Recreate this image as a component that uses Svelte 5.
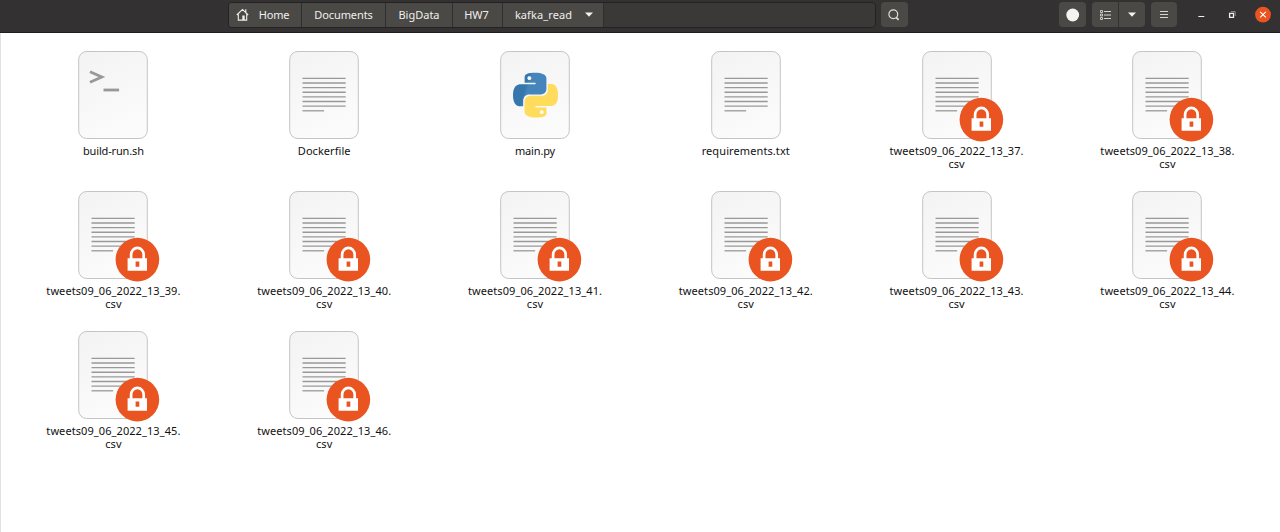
<script>
  const locked = (n) => ({ kind: 'text', locked: true, name: `tweets09_06_2022_13_${n}.`, rest: 'csv', spacing: 0.08 });
  const files = [
    { kind: 'shell', name: 'build-run.sh', spacing: -0.15 },
    { kind: 'text', name: 'Dockerfile', spacing: 0.05 },
    { kind: 'python', name: 'main.py', spacing: -0.15 },
    { kind: 'text', name: 'requirements.txt', spacing: 0.1 },
    ...[37, 38, 39, 40, 41, 42, 43, 44, 45, 46].map(locked)
  ];
  const lines = [0, 1, 2, 3, 4, 5, 6];
  const snake =
    'M14.25.18l.9.2.73.26.59.3.45.32.34.34.25.34.16.33.1.3.04.26.02.2-.01.13V8.5l-.05.63-.13.55-.21.46-.26.38-.3.31-.33.25-.35.19-.35.14-.33.1-.3.07-.26.04-.21.02H8.77l-.69.05-.59.14-.5.22-.41.27-.33.32-.27.35-.2.36-.15.37-.1.35-.07.32-.04.27-.02.21v3.06H3.17l-.21-.03-.28-.07-.32-.12-.35-.18-.36-.26-.36-.36-.35-.46-.32-.59-.28-.73-.21-.88-.14-1.05-.05-1.23.06-1.22.16-1.04.24-.87.32-.71.36-.57.4-.44.42-.33.42-.24.4-.16.36-.1.32-.05.24-.01h.16l.06.01h8.16v-.83H6.18l-.01-2.75-.02-.37.05-.34.11-.31.17-.28.25-.26.31-.23.38-.2.44-.18.51-.15.58-.12.64-.1.71-.06.77-.04.84-.02 1.27.05zm-6.3 1.98l-.23.33-.08.41.08.41.23.34.33.22.41.09.41-.09.33-.22.23-.34.08-.41-.08-.41-.23-.33-.33-.22-.41-.09-.41.09z';
</script>

<div class="window">
  <header>
    <nav>
      <button class="crumb home">
        <svg width="13" height="13" viewBox="0 0 13 13" fill="none" stroke="#f0efed" stroke-width="1.1">
          <path d="M.8 7 6.5 1.4 12.2 7M2.3 6.2v5.9h8.4V6.2M9.8 1.2v3" />
          <path d="M6.3 7.6h2.4V12H6.3z" fill="#f0efed" stroke="none" />
        </svg>
        <span>Home</span>
      </button>
      <button class="crumb docs">Documents</button>
      <button class="crumb data">BigData</button>
      <button class="crumb hw">HW7</button>
      <button class="crumb current">
        <span>kafka_read</span>
        <svg class="caret" width="8" height="5" viewBox="0 0 8 5"><path d="M0 .5h8L4 4.7z" fill="#f4f3f1" /></svg>
      </button>
    </nav>
    <button class="tool search" aria-label="Search">
      <svg width="12" height="12" viewBox="0 0 12 12" fill="none" stroke="#deddda" stroke-width="1.2">
        <circle cx="5.3" cy="5.3" r="4.4" /><path d="m8.2 8.4 2.4 2.4" stroke-width="1.7" />
      </svg>
    </button>
    <button class="tool dot" aria-label="Progress">
      <svg width="14" height="14" viewBox="0 0 14 14"><circle cx="6.7" cy="7" r="6.4" fill="#f4f3f1" /></svg>
    </button>
    <div class="pair">
      <button class="tool" aria-label="List view">
        <svg width="11" height="10" viewBox="0 0 11 10" fill="none" stroke="#d6d5d2">
          <path d="M4 1.5h7M4 5h7M4 8.5h7" />
          <path d="M.5.5h2v2h-2zM.5 4h2v2h-2zM.5 7.5h2v2h-2z" stroke-width=".9" />
        </svg>
      </button>
      <button class="tool" aria-label="View options">
        <svg width="8" height="5" viewBox="0 0 8 5"><path d="M0 .5h8L4 4.7z" fill="#f4f3f1" /></svg>
      </button>
    </div>
    <button class="tool menu" aria-label="Menu">
      <svg width="8" height="9" viewBox="0 0 8 9"><path d="M0 1.5h8M0 4.5h8M0 7.5h8" stroke="#d6d5d2" /></svg>
    </button>
    <div class="controls">
      <svg width="80" height="20" viewBox="0 0 80 20" fill="none" stroke="#f0efed">
        <path d="M4.3 12.5h6" />
        <path d="M35.6 9.4h3.9v4h-3.9z" stroke-width="1.3" />
        <path d="M37 7.6h4.2v4.4" stroke="#a5a4a2" stroke-width=".8" />
        <circle cx="69" cy="10.6" r="7.9" fill="#e95420" stroke="none" />
        <path d="m66.2 7.8 5.6 5.6m0-5.6-5.6 5.6" stroke="#fff" stroke-width="1.1" />
      </svg>
    </div>
  </header>

  <main>
    {#each files as file}
      <article>
        <svg class="icon" width="94" height="92" viewBox="-12.2 0 94 92">
          <defs>
            <linearGradient id="paper" x1="0" y1="0" x2=".4" y2="1">
              <stop offset="0" stop-color="#f3f3f3" /><stop offset=".5" stop-color="#f7f7f7" /><stop offset="1" stop-color="#fbfbfb" />
            </linearGradient>
            <linearGradient id="blue" x1="0" y1="0" x2="1" y2=".3">
              <stop offset=".45" stop-color="#3577ad" /><stop offset=".55" stop-color="#4585bb" />
            </linearGradient>
          </defs>
          <rect x=".5" y=".5" width="68.6" height="87" rx="8" fill="url(#paper)" stroke="#bdbdbd" stroke-width=".9" />
          {#if file.kind === 'text'}
            {#each lines as i}
              <path d="M13.3 {27.4 + i * 4.62}h43.2" stroke="#999" stroke-width="1.3" />
            {/each}
            <path d="M13.3 59.8h21.6" stroke="#999" stroke-width="1.3" />
          {:else if file.kind === 'shell'}
            <path d="m11.8 20.8 11.8 5.2-11.8 5.2" fill="none" stroke="#989898" stroke-width="2.8" />
            <path d="M25.3 39h15.6" stroke="#989898" stroke-width="2.8" />
          {:else}
            <g transform="translate(12.9 21.7) scale(1.87)">
              <path d={snake} fill="url(#blue)" fill-rule="evenodd" />
              <path d={snake} fill="#ffdc5c" fill-rule="evenodd" transform="rotate(180 12 12)" />
            </g>
          {/if}
          {#if file.locked}
            <circle cx="59.2" cy="68.6" r="21.8" fill="#e95420" />
            <path d="M52.9 69v-5.2a6.3 7 0 0 1 12.6 0V69" fill="none" stroke="#fff" stroke-width="2.7" />
            <path fill="#fff" fill-rule="evenodd" d="M49.4 67.2h19.4v12.6H49.4zM57.4 70.5v5.3h3.7v-5.3z" />
          {/if}
        </svg>
        <p style:letter-spacing="{file.spacing}px">{file.name}{#if file.rest}<br />{file.rest}{/if}</p>
      </article>
    {/each}
  </main>
</div>

<style>
  :global(body) { margin: 0; background: #fff; }
  .window { width: 1280px; height: 532px; overflow: hidden; box-sizing: border-box; font: 11px/13px "Noto Sans", sans-serif; }
  header { display: flex; align-items: flex-start; height: 33px; box-sizing: border-box; padding: 2px 0 0 228px; background: #343132; border-bottom: 1px solid #1f1d1e; }
  button { display: flex; align-items: center; justify-content: center; box-sizing: border-box; margin: 0; padding: 0; border: 0; height: 24px; font: inherit; color: #f0efed; background: #4a4946; }
  nav { display: flex; width: 648px; height: 26px; box-sizing: border-box; border: 1px solid #242223; border-radius: 4px; background: #3b3937; overflow: hidden; }
  .crumb { border-right: 1px solid #2f2d2d; flex: none; padding-bottom: 2px; }
  .home { width: 73px; gap: 10px; padding-right: 5px; letter-spacing: -0.15px; }
  .docs { width: 84px; letter-spacing: -0.1px; }
  .data { width: 67px; }
  .hw { width: 50px; padding-right: 2px; }
  .current { width: 101px; gap: 13px; letter-spacing: 0.1px; padding-left: 2px; }
  .tool { width: 27px; height: 25px; border-radius: 4px; }
  .search { margin-left: 5px; padding-right: 1px; }
  .dot { margin-left: 151px; }
  .pair { display: flex; gap: 1px; margin-left: 6px; }
  .pair .tool { width: 26px; }
  .pair .tool:first-child { border-radius: 4px 0 0 4px; }
  .pair .tool:last-child { border-radius: 0 4px 4px 0; }
  .menu { margin-left: 6px; width: 26px; }
  .controls { margin-left: 17px; padding-top: 2px; height: 20px; }
  main { display: grid; grid-template-columns: repeat(6, 210.8px); grid-auto-rows: 140px; height: 499px; box-sizing: border-box; padding: 18px 0 0 7px; border-left: 1px solid #e2e2e2; }
  article { display: flex; flex-direction: column; align-items: center; }
  .icon { display: block; }
  p { margin: 1px 0 0; text-align: center; color: #111; white-space: nowrap; }
</style>
